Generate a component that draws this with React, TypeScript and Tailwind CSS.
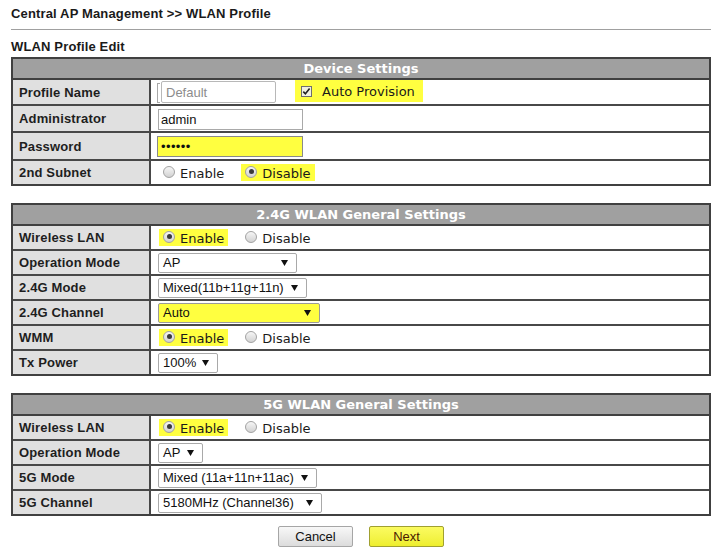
import React from "react";

const arial = "font-['Liberation_Sans',Arial,sans-serif]";
const verdana = "font-['DejaVu_Sans',Verdana,sans-serif]";

function Radio({ checked }: { checked: boolean }) {
  return (
    <span className="w-[12px] h-[12px] rounded-full border border-[#a2a2a2] bg-gradient-to-b from-[#f6f6f6] to-[#d2d2d2] flex items-center justify-center shrink-0 -mt-[2px]">
      {checked && <span className="w-[5px] h-[5px] rounded-full bg-[#3a3a3a]" />}
    </span>
  );
}

function RadioItem({ label, checked, highlight }: { label: string; checked: boolean; highlight?: boolean }) {
  return (
    <span
      className={
        highlight
          ? "inline-flex items-center gap-[5px] px-[4px] h-[17px] bg-[#ffff40]"
          : "inline-flex items-center gap-[5px] px-[4px] h-[17px]"
      }
    >
      <Radio checked={checked} />
      <span className={`${verdana} text-[13px] text-[#1a1a1a] leading-none pt-[2px]`}>{label}</span>
    </span>
  );
}

function EnableDisable({ enabled }: { enabled: boolean }) {
  return (
    <div className="flex items-center gap-[13px] ml-[1px]">
      <RadioItem label="Enable" checked={enabled} highlight={enabled} />
      <RadioItem label="Disable" checked={!enabled} highlight={!enabled} />
    </div>
  );
}

function Select({ value, width, highlight }: { value: string; width: string; highlight?: boolean }) {
  return (
    <div
      className={
        highlight
          ? `${width} h-[20px] border border-[#9a9a9a] rounded-[2px] bg-[#ffff40] pl-[4px] pr-[8px] flex items-center justify-between`
          : `${width} h-[20px] border border-[#a9a9a9] rounded-[2px] bg-white pl-[4px] pr-[8px] flex items-center justify-between`
      }
    >
      <span className={`${arial} text-[13px] text-[#111] whitespace-nowrap leading-none`}>{value}</span>
      <svg width="7" height="6" viewBox="0 0 7 6" className="shrink-0">
        <polygon points="0,0 7,0 3.5,6" fill="#111" />
      </svg>
    </div>
  );
}

interface Row {
  label: string;
  h: string;
  content: React.ReactNode;
}

function Section({ title, rows }: { title: string; rows: Row[] }) {
  return (
    <div className="border-2 border-[#404040]">
      <div className="h-[21px] bg-[#a0a0a0] border-b-2 border-[#404040] flex items-center justify-center">
        <span className={`${verdana} text-[13px] font-bold text-white leading-none`}>{title}</span>
      </div>
      {rows.map((row, i) => (
        <div
          key={row.label}
          className={i < rows.length - 1 ? `flex ${row.h} border-b-2 border-[#484848]` : `flex ${row.h}`}
        >
          <div className="w-[138px] shrink-0 bg-[#e0e0e0] border-r-2 border-[#484848] flex items-center pl-[6px]">
            <span className={`${arial} text-[13px] font-bold text-[#1e1e1e] leading-none tracking-[0.15px]`}>
              {row.label}
            </span>
          </div>
          <div className="flex-1 flex items-center pl-[7px] bg-white">{row.content}</div>
        </div>
      ))}
    </div>
  );
}

export default function App() {
  const device: Row[] = [
    {
      label: "Profile Name",
      h: "h-[26px]",
      content: (
        <div className="flex items-start h-full -ml-[1px]">
          <span className="w-[3px] h-[20px] mt-[3px] border border-r-0 border-[#a8a8a8]" />
          <div className="ml-[1px] mt-[1px] w-[115px] h-[22px] border border-[#b8b8b8] rounded-[2px] flex items-center pl-[4px]">
            <span className={`${arial} text-[13px] text-[#8c8c8c] leading-none`}>Default</span>
          </div>
          <div className="ml-[19px] w-[128px] h-[22px] bg-[#ffff40] flex items-center pl-[6px] gap-[10px]">
            <svg width="11" height="11" viewBox="0 0 11 11" className="shrink-0">
              <rect x="0.5" y="0.5" width="10" height="10" fill="#f0f0e0" stroke="#6e6e6e" />
              <path d="M2.3 5.6 L4.4 7.8 L8.6 2.6" fill="none" stroke="#222" strokeWidth="1.6" />
            </svg>
            <span className={`${verdana} text-[13px] text-[#1a1a1a] leading-none`}>Auto Provision</span>
          </div>
        </div>
      ),
    },
    {
      label: "Administrator",
      h: "h-[27px]",
      content: (
        <div className="w-[145px] h-[21px] border border-[#a9a9a9] flex items-center pl-[2px] mt-[2px]">
          <span className={`${arial} text-[13px] text-[#111] leading-none`}>admin</span>
        </div>
      ),
    },
    {
      label: "Password",
      h: "h-[28px]",
      content: (
        <div className="w-[146px] h-[21px] -ml-[1px] border border-[#8a8a8a] bg-[#ffff40] flex items-center pl-[3px] mt-[1px]">
          <span className={`${arial} text-[13px] text-[#111] leading-none tracking-[0.4px]`}>••••••</span>
        </div>
      ),
    },
    {
      label: "2nd Subnet",
      h: "h-[23px]",
      content: <EnableDisable enabled={false} />,
    },
  ];

  const g24: Row[] = [
    { label: "Wireless LAN", h: "h-[25px]", content: <EnableDisable enabled={true} /> },
    { label: "Operation Mode", h: "h-[25px]", content: <Select value="AP" width="w-[139px]" /> },
    { label: "2.4G Mode", h: "h-[25px]", content: <Select value="Mixed(11b+11g+11n)" width="w-[149px]" /> },
    { label: "2.4G Channel", h: "h-[25px]", content: <Select value="Auto" width="w-[162px]" highlight /> },
    { label: "WMM", h: "h-[25px]", content: <EnableDisable enabled={true} /> },
    { label: "Tx Power", h: "h-[23px]", content: <Select value="100%" width="w-[60px]" /> },
  ];

  const g5: Row[] = [
    { label: "Wireless LAN", h: "h-[25px]", content: <EnableDisable enabled={true} /> },
    { label: "Operation Mode", h: "h-[25px]", content: <Select value="AP" width="w-[45px]" /> },
    { label: "5G Mode", h: "h-[25px]", content: <Select value="Mixed (11a+11n+11ac)" width="w-[159px]" /> },
    { label: "5G Channel", h: "h-[23px]", content: <Select value="5180MHz (Channel36)" width="w-[164px]" /> },
  ];

  return (
    <div className="w-[721px] h-[553px] bg-white overflow-hidden pl-[11px] pr-[10px] pt-[6px]">
      <div className={`${arial} text-[13px] font-bold text-[#1a1a1a] leading-[15px] tracking-[0.15px]`}>
        Central AP Management &gt;&gt; WLAN Profile
      </div>
      <div className="mt-[8px] border-t border-[#a0a0a0]" />
      <div className={`${arial} text-[13px] font-bold text-[#1a1a1a] leading-[15px] mt-[9px] tracking-[0.15px]`}>
        WLAN Profile Edit
      </div>
      <div className="mt-[3px] space-y-[17px]">
        <Section title="Device Settings" rows={device} />
        <Section title="2.4G WLAN General Settings" rows={g24} />
        <Section title="5G WLAN General Settings" rows={g5} />
      </div>
      <div className="flex justify-center gap-[16px] mt-[10px]">
        <button className="w-[75px] h-[21px] border border-[#a6a6a6] rounded-[2px] bg-gradient-to-b from-[#f8f8f8] to-[#dcdcdc] flex items-center justify-center">
          <span className={`${arial} text-[13px] text-[#111] leading-none`}>Cancel</span>
        </button>
        <button className="w-[75px] h-[21px] border border-[#a0a030] rounded-[2px] bg-gradient-to-b from-[#fbfb60] to-[#eeee2c] flex items-center justify-center">
          <span className={`${arial} text-[13px] text-[#4a1800] leading-none`}>Next</span>
        </button>
      </div>
    </div>
  );
}
